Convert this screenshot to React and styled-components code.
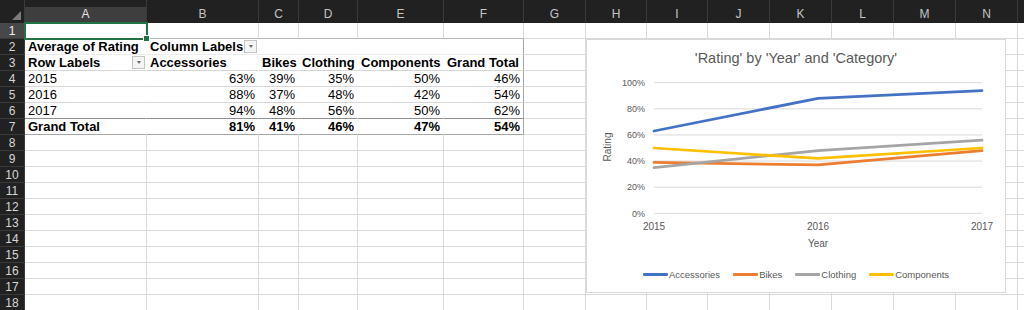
import React from 'react';
import styled, { createGlobalStyle } from 'styled-components';

const COLS = [25, 122, 112, 40, 59, 86, 80, 62, 61, 61, 62, 62, 62, 62, 62, 10];
const TEMPLATE = COLS.map((c) => c + 'px').join(' ');
const LETTERS = ['A', 'B', 'C', 'D', 'E', 'F', 'G', 'H', 'I', 'J', 'K', 'L', 'M', 'N', 'O'];

const GRID = '#dadada';

const Global = createGlobalStyle`
  html, body { margin: 0; padding: 0; background: #fff; overflow: hidden; }
  body { font-family: "Liberation Sans", Arial, sans-serif; }
`;

const Sheet = styled.div`
  position: relative;
  width: 1024px;
  height: 310px;
  overflow: hidden;
  background: #fff;
`;

const Row = styled.div`
  display: grid;
  grid-template-columns: ${TEMPLATE};
  height: ${(p) => p.$h}px;
`;

const Corner = styled.div`
  background: #212121;
  display: flex;
  justify-content: flex-end;
  align-items: flex-end;
  padding: 0 3px 3px 0;
  box-sizing: border-box;
  border-right: 1px solid #3a3a3a;
`;

const CornerTriangle = styled.span`
  width: 0;
  height: 0;
  border-left: 9px solid transparent;
  border-bottom: 9px solid #7b7b7b;
`;

const ColHead = styled.div`
  box-sizing: border-box;
  background: ${(p) =>
    p.$active ? 'linear-gradient(#212121 0 7px, #3e3e3e 7px)' : '#212121'};
  color: ${(p) => (p.$active ? '#e2e2e2' : '#c4c4c4')};
  font-size: 12px;
  display: flex;
  align-items: center;
  justify-content: center;
  padding-top: 6px;
  border-right: 1px solid #3a3a3a;
  border-bottom: 1px solid ${(p) => (p.$active ? '#4e8a63' : '#212121')};
`;

const RowHead = styled.div`
  box-sizing: border-box;
  background: ${(p) => (p.$active ? '#484848' : '#212121')};
  color: ${(p) => (p.$active ? '#f0f0f0' : '#d6d6d6')};
  font-size: 12px;
  display: flex;
  align-items: center;
  justify-content: center;
  border-bottom: 1px solid #3a3a3a;
  border-right: 1px solid #3a3a3a;
`;

const Cell = styled.div`
  box-sizing: border-box;
  min-width: 0;
  display: flex;
  align-items: center;
  justify-content: ${(p) => (p.$align === 'right' ? 'flex-end' : 'flex-start')};
  padding: 0 ${(p) => (p.$dd ? 1 : 3)}px 0 3px;
  font-size: 13px;
  line-height: 15px;
  font-weight: ${(p) => (p.$bold ? 700 : 400)};
  color: #000;
  white-space: nowrap;
  border-right: 1px solid ${(p) => p.$vline || GRID};
  border-bottom: 1px solid ${(p) => p.$hline || GRID};
`;

const CellText = styled.span`
  flex: 0 0 auto;
`;

const DropButton = styled.span`
  margin-left: auto;
  width: 13px;
  height: 13px;
  box-sizing: border-box;
  border: 1px solid #c4c4c4;
  background: #f4f4f4;
  display: flex;
  align-items: center;
  justify-content: center;
  &::after {
    content: '';
    width: 0;
    height: 0;
    border-left: 2.5px solid transparent;
    border-right: 2.5px solid transparent;
    border-top: 3px solid #6b6b6b;
  }
`;

const Selection = styled.div`
  position: absolute;
  left: 24px;
  top: 22px;
  width: 124px;
  height: 18px;
  box-sizing: border-box;
  border: 2px solid #217346;
  pointer-events: none;
  &::after {
    content: '';
    position: absolute;
    right: -4px;
    bottom: -4px;
    width: 5px;
    height: 5px;
    background: #217346;
    border: 1px solid #fff;
  }
`;

/* ---------- chart ---------- */

const ChartBox = styled.div`
  position: absolute;
  left: 586px;
  top: 39px;
  width: 420px;
  height: 254px;
  box-sizing: border-box;
  background: #fff;
  border: 1px solid #d9d9d9;
  display: flex;
  flex-direction: column;
  align-items: center;
  padding-top: 8px;
`;

const ChartTitle = styled.div`
  font-family: "Liberation Sans", Arial, sans-serif;
  font-size: 14.5px;
  line-height: 20px;
  color: #595959;
`;

const Plot = styled.svg`
  display: block;
  width: 418px;
  height: 190px;
  font-family: "Liberation Sans", Arial, sans-serif;
`;

const Legend = styled.div`
  display: flex;
  align-items: center;
  gap: 13px;
  margin-top: 9px;
  height: 14px;
`;

const LegendItem = styled.div`
  display: flex;
  align-items: center;
`;

const LegendSwatch = styled.span`
  width: 25px;
  height: 3px;
  background: ${(p) => p.$color};
  border-radius: 1px;
`;

const LegendLabel = styled.span`
  font-size: 9.5px;
  color: #595959;
  margin-left: 1px;
`;

const SERIES = [
  { name: 'Accessories', color: '#4472C4', values: [0.63, 0.88, 0.94] },
  { name: 'Bikes', color: '#ED7D31', values: [0.39, 0.37, 0.48] },
  { name: 'Clothing', color: '#A5A5A5', values: [0.35, 0.48, 0.56] },
  { name: 'Components', color: '#FFC000', values: [0.5, 0.42, 0.5] },
];

const YEARS = ['2015', '2016', '2017'];
const XS = [67, 231, 395];
const Y0 = 145.3;
const YSPAN = 130.6;
const yOf = (v) => Y0 - v * YSPAN;

function Chart() {
  const ticks = [0, 0.2, 0.4, 0.6, 0.8, 1];
  return (
    <ChartBox>
      <ChartTitle>'Rating' by 'Year' and 'Category'</ChartTitle>
      <Plot viewBox="0 0 418 190">
        {ticks.map((t) => (
          <g key={t}>
            <line x1={67} x2={395} y1={yOf(t)} y2={yOf(t)} stroke="#d9d9d9" strokeWidth="1" />
            <text x={58} y={yOf(t) + 3.3} fontSize="9" fill="#595959" textAnchor="end">
              {Math.round(t * 100)}%
            </text>
          </g>
        ))}
        {SERIES.map((s) => (
          <polyline
            key={s.name}
            points={s.values.map((v, i) => `${XS[i]},${yOf(v)}`).join(' ')}
            fill="none"
            stroke={s.color}
            strokeWidth="2.75"
            strokeLinecap="round"
            strokeLinejoin="round"
          />
        ))}
        {YEARS.map((y, i) => (
          <text key={y} x={XS[i]} y={162} fontSize="10" fill="#595959" textAnchor="middle">
            {y}
          </text>
        ))}
        <text x={231} y={179} fontSize="10" fill="#595959" textAnchor="middle">
          Year
        </text>
        <text
          x={0}
          y={0}
          fontSize="10"
          fill="#595959"
          textAnchor="middle"
          transform="translate(24 79) rotate(-90)"
        >
          Rating
        </text>
      </Plot>
      <Legend>
        {SERIES.map((s) => (
          <LegendItem key={s.name}>
            <LegendSwatch $color={s.color} />
            <LegendLabel>{s.name}</LegendLabel>
          </LegendItem>
        ))}
      </Legend>
    </ChartBox>
  );
}

/* ---------- data ---------- */

const b = (text, extra = {}) => ({ text, bold: true, ...extra });
const r = (text, bold = false) => ({ text, bold, align: 'right' });

const PIVOT = {
  2: [b('Average of Rating'), b('Column Labels', { dd: true }), {}, {}, {}, {}],
  3: [b('Row Labels', { dd: true }), b('Accessories'), b('Bikes'), b('Clothing'), b('Components'), b('Grand Total')],
  4: [{ text: '2015' }, r('63%'), r('39%'), r('35%'), r('50%'), r('46%')],
  5: [{ text: '2016' }, r('88%'), r('37%'), r('48%'), r('42%'), r('54%')],
  6: [{ text: '2017' }, r('94%'), r('48%'), r('56%'), r('50%'), r('62%')],
  7: [b('Grand Total'), r('81%', true), r('41%', true), r('46%', true), r('47%', true), r('54%', true)],
};

const PIVOT_HLINE = {
  1: '#b8b8b8',
  2: '#ececec',
  3: '#d6d6d6',
  4: '#d6d6d6',
  5: '#d6d6d6',
  6: '#8e8e8e',
  7: '#a6a6a6',
};

function SheetRow({ n }) {
  const pivot = PIVOT[n];
  return (
    <Row $h={16}>
      <RowHead $active={n === 1}>{n}</RowHead>
      {LETTERS.map((L, ci) => {
        const inPivotCol = ci < 6;
        const data = pivot && inPivotCol ? pivot[ci] : null;
        let vline;
        let hline;
        if (pivot && inPivotCol) {
          vline = ci === 5 ? '#a6a6a6' : '#ffffff';
        }
        if (inPivotCol && PIVOT_HLINE[n]) hline = PIVOT_HLINE[n];
        return (
          <Cell
            key={L}
            $vline={vline}
            $hline={hline}
            $bold={data && data.bold}
            $align={data && data.align}
            $dd={data && data.dd}
          >
            {data && data.text && <CellText>{data.text}</CellText>}
            {data && data.dd && <DropButton />}
          </Cell>
        );
      })}
    </Row>
  );
}

export default function App() {
  const rows = Array.from({ length: 18 }, (_, i) => i + 1);
  return (
    <>
      <Global />
      <Sheet>
        <Row $h={23}>
          <Corner>
            <CornerTriangle />
          </Corner>
          {LETTERS.map((L) => (
            <ColHead key={L} $active={L === 'A'}>
              {L === 'O' ? '' : L}
            </ColHead>
          ))}
        </Row>
        {rows.map((n) => (
          <SheetRow key={n} n={n} />
        ))}
        <Selection />
        <Chart />
      </Sheet>
    </>
  );
}
